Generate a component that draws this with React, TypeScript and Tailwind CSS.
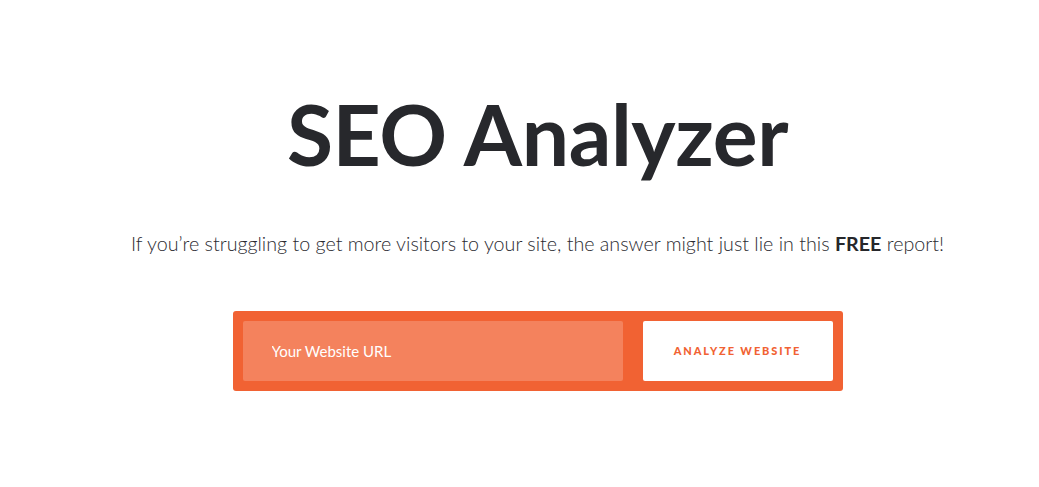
export default function App() {
  return (
    <div className="min-h-[487px] w-full bg-white pl-[36px] font-['Lato','Noto_Sans',sans-serif]">
      <div className="flex flex-col items-center pt-[84px]">
        <h1 className="text-[84px] leading-[100px] font-bold tracking-[-0.4px] text-[#27282c]">
          SEO Analyzer
        </h1>
        <p className="mt-[48px] text-[19.7px] leading-[24px] font-light text-[#2b2b31]">
          If you’re struggling to get more visitors to your site, the answer might just lie in this{' '}
          <strong className="font-bold text-[#26272b]">FREE</strong> report!
        </p>
        <form className="mt-[55px] flex w-[610px] gap-[20px] rounded-[3px] bg-[#f16233] p-[10px]">
          <input
            type="text"
            placeholder="Your Website URL"
            className="h-[60px] w-[380px] rounded-[2px] bg-[#f4825d] px-[29px] text-[15px] text-white outline-none placeholder:text-white"
          />
          <button
            type="button"
            className="h-[60px] w-[190px] rounded-[2px] bg-white text-[11px] font-black tracking-[1.9px] text-[#f16233]"
          >
            ANALYZE WEBSITE
          </button>
        </form>
      </div>
    </div>
  )
}
